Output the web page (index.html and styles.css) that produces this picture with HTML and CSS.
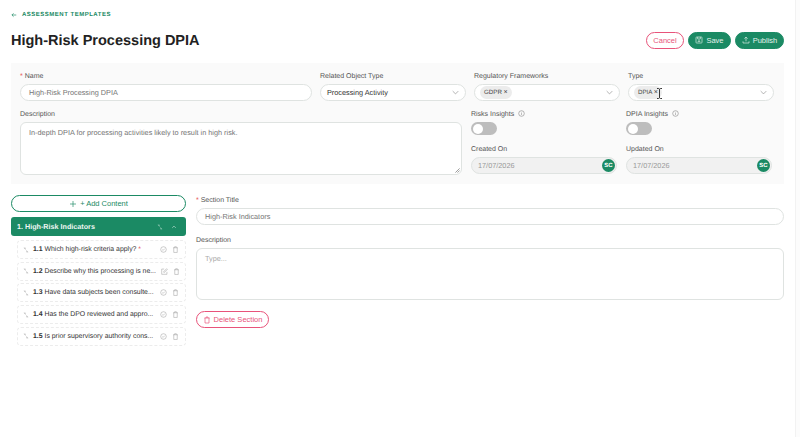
FILE: index.html
```html
<!DOCTYPE html>
<html lang="en">
<head>
    <meta charset="UTF-8">
    <meta name="viewport" content="width=device-width, initial-scale=1.0">
    <title>High-Risk Processing DPIA</title>
    <link rel="stylesheet" href="styles.css">
</head>
<body>
    <div class="page">
        <!-- Header -->
        <a href="#" class="back-link">
            <svg class="back-icon" viewBox="0 0 8 8"><path d="M7 4H1.2M3.4 1.800 1.200 4l2.200 2.200"/></svg>
            ASSESSMENT TEMPLATES
        </a>
        <div class="title-row">
            <h1>High-Risk Processing DPIA</h1>
            <div class="actions">
                <button class="btn btn-outline btn-cancel">Cancel</button>
                <button class="btn btn-primary btn-save">
                    <svg class="icon" viewBox="0 0 12 12"><rect x="1.500" y="1.500" width="9" height="9" rx="1"/><path d="M4 1.500v3h4v-3M4 8h4M6 5.500v3"/></svg>
                    Save
                </button>
                <button class="btn btn-primary btn-publish">
                    <svg class="icon" viewBox="0 0 12 12"><path d="M1.500 8v2.500h9V8M6 8V1.800M3.600 4 6 1.600 8.400 4"/></svg>
                    Publish
                </button>
            </div>
        </div>

        <!-- Template details -->
        <div class="details">
            <div class="details-top">
                <div class="field field-name">
                    <label><span class="req">*</span> Name</label>
                    <div class="input">High-Risk Processing DPIA</div>
                </div>
                <div class="field field-side">
                    <label>Related Object Type</label>
                    <div class="input select dark">Processing Activity
                        <svg class="chevron" viewBox="0 0 10 6"><path d="M1 1l4 4 4-4"/></svg>
                    </div>
                </div>
                <div class="field field-side">
                    <label>Regulatory Frameworks</label>
                    <div class="input select tags"><span class="tag">GDPR <i>×</i></span>
                        <svg class="chevron" viewBox="0 0 10 6"><path d="M1 1l4 4 4-4"/></svg>
                    </div>
                </div>
                <div class="field field-side">
                    <label>Type</label>
                    <div class="input select tags"><span class="tag">DPIA <i>×</i></span>
                        <svg class="chevron" viewBox="0 0 10 6"><path d="M1 1l4 4 4-4"/></svg>
                    </div>
                </div>
            </div>
            <div class="details-bottom">
                <div class="field field-desc">
                    <label>Description</label>
                    <div class="textarea textarea-top">In-depth DPIA for processing activities likely to result in high risk.
                        <svg class="resize" viewBox="0 0 6 6"><path d="M5.500.5l-5 5M5.500 3l-2.500 2.500"/></svg>
                    </div>
                </div>
                <div class="side-col side-risks">
                    <label>Risks Insights
                        <svg class="info" viewBox="0 0 8 8"><circle cx="4" cy="4" r="3.200"/><path d="M4 3.600v2M4 2.200v.6"/></svg>
                    </label>
                    <div class="toggle"><span class="knob"></span></div>
                    <label class="date-label">Created On</label>
                    <div class="input date">17/07/2026<span class="avatar">SC</span></div>
                </div>
                <div class="side-col side-dpia">
                    <label>DPIA Insights
                        <svg class="info" viewBox="0 0 8 8"><circle cx="4" cy="4" r="3.200"/><path d="M4 3.600v2M4 2.200v.6"/></svg>
                    </label>
                    <div class="toggle"><span class="knob"></span></div>
                    <label class="date-label">Updated On</label>
                    <div class="input date">17/07/2026<span class="avatar">SC</span></div>
                </div>
            </div>
        </div>

        <!-- Builder -->
        <div class="builder">
            <div class="outline">
                <button class="add-btn">
                    <svg class="icon" viewBox="0 0 12 12"><path d="M6 1.500v9M1.500 6h9"/></svg>
                    + Add Content
                </button>
                <div class="section-head">
                    <span>1. High-Risk Indicators</span>
                    <svg class="drag" viewBox="0 0 10 10"><path d="M1.500 1.500h2.500v2.500M4 4 1.500 1.500M8.500 8.500H6V6M6 6l2.500 2.500"/></svg>
                    <svg class="collapse" viewBox="0 0 10 6"><path d="M2 4.500l3-3 3 3"/></svg>
                </div>
                <div class="items">
                    <div class="item">
                        <svg class="drag" viewBox="0 0 10 10"><path d="M1.500 1.500h2.500v2.500M4 4 1.500 1.500M8.500 8.500H6V6M6 6l2.500 2.500"/></svg>
                        <span class="item-text"><b>1.1</b> Which high-risk criteria apply? <span class="req">*</span></span>
                        <svg class="item-icon" viewBox="0 0 10 10"><circle cx="5" cy="5" r="4"/><path d="M3.300 5.200l1.200 1.100 2.200-2.400"/></svg>
                        <svg class="item-icon" viewBox="0 0 10 10"><path d="M1.500 2.500h7M3.800 2.500V1h2.400v1.500M2.500 2.500v6.700h5V2.500"/></svg>
                    </div>
                    <div class="item">
                        <svg class="drag" viewBox="0 0 10 10"><path d="M1.500 1.500h2.500v2.500M4 4 1.500 1.500M8.500 8.500H6V6M6 6l2.500 2.500"/></svg>
                        <span class="item-text"><b>1.2</b> Describe why this processing is ne...</span>
                        <svg class="item-icon" viewBox="0 0 10 10"><path d="M8.500 5.500v3.500h-7.500v-7.500h3.500M4 6.200V5l4-4 1 1-4 4.200z"/></svg>
                        <svg class="item-icon" viewBox="0 0 10 10"><path d="M1.500 2.500h7M3.800 2.500V1h2.400v1.500M2.500 2.500v6.700h5V2.500"/></svg>
                    </div>
                    <div class="item">
                        <svg class="drag" viewBox="0 0 10 10"><path d="M1.500 1.500h2.500v2.500M4 4 1.500 1.500M8.500 8.500H6V6M6 6l2.500 2.500"/></svg>
                        <span class="item-text"><b>1.3</b> Have data subjects been consulte...</span>
                        <svg class="item-icon" viewBox="0 0 10 10"><circle cx="5" cy="5" r="4"/><path d="M3.300 5.200l1.200 1.100 2.200-2.400"/></svg>
                        <svg class="item-icon" viewBox="0 0 10 10"><path d="M1.500 2.500h7M3.800 2.500V1h2.400v1.500M2.500 2.500v6.700h5V2.500"/></svg>
                    </div>
                    <div class="item">
                        <svg class="drag" viewBox="0 0 10 10"><path d="M1.500 1.500h2.500v2.500M4 4 1.500 1.500M8.500 8.500H6V6M6 6l2.500 2.500"/></svg>
                        <span class="item-text"><b>1.4</b> Has the DPO reviewed and appro...</span>
                        <svg class="item-icon" viewBox="0 0 10 10"><circle cx="5" cy="5" r="4"/><path d="M3.300 5.200l1.200 1.100 2.200-2.400"/></svg>
                        <svg class="item-icon" viewBox="0 0 10 10"><path d="M1.500 2.500h7M3.800 2.500V1h2.400v1.500M2.500 2.500v6.700h5V2.500"/></svg>
                    </div>
                    <div class="item">
                        <svg class="drag" viewBox="0 0 10 10"><path d="M1.500 1.500h2.500v2.500M4 4 1.500 1.500M8.500 8.500H6V6M6 6l2.500 2.500"/></svg>
                        <span class="item-text"><b>1.5</b> Is prior supervisory authority cons...</span>
                        <svg class="item-icon" viewBox="0 0 10 10"><circle cx="5" cy="5" r="4"/><path d="M3.300 5.200l1.200 1.100 2.200-2.400"/></svg>
                        <svg class="item-icon" viewBox="0 0 10 10"><path d="M1.500 2.500h7M3.800 2.500V1h2.400v1.500M2.500 2.500v6.700h5V2.500"/></svg>
                    </div>
                </div>
            </div>
            <div class="editor">
                <label><span class="req">*</span> Section Title</label>
                <div class="input">High-Risk Indicators</div>
                <label class="editor-desc">Description</label>
                <div class="textarea textarea-section placeholder">Type...</div>
                <button class="btn btn-outline btn-delete">
                    <svg class="icon" viewBox="0 0 12 12"><path d="M2 3h8M4.500 3V1.500h3V3M3 3v7.500h6V3"/></svg>
                    Delete Section
                </button>
            </div>
        </div>
    </div>

    <!-- Mouse pointer over the Type select -->
    <svg class="cursor" viewBox="0 0 7 11"><path d="M1 .5h1.700l.8.7.8-.7H6M3.500 1.200v8.600M1 10.500h1.700l.8-.7.8.7H6"/></svg>
    <div class="scroll-edge"></div>
</body>
</html>
```

FILE: styles.css
```css
:root {
    --green: #1b8a64;
    --red: #e8537a;
    --border: #dfe3e1;
    --text: #3a3a3a;
    --muted: #757575;
}

* {
    box-sizing: border-box;
}

body {
    font-family: "Liberation Sans", Arial, sans-serif;
    background-color: #fff;
    color: var(--text);
    margin: 0;
    font-size: 7px;
    text-rendering: geometricPrecision;
}

.page {
    padding: 10px 16px 0 11px;
}

/* Header */
.back-link {
    display: flex;
    align-items: center;
    gap: 5px;
    height: 9px;
    color: var(--green);
    font-size: 6px;
    font-weight: bold;
    letter-spacing: 0.5px;
    text-decoration: none;
}

.back-icon {
    width: 6px;
    height: 6px;
    fill: none;
    stroke: var(--green);
    stroke-width: 0.9;
}

.title-row {
    display: flex;
    justify-content: space-between;
    align-items: center;
    margin-top: 11px;
    height: 22px;
}

h1 {
    margin: 0;
    font-size: 14.500px;
    color: #222;
}

.actions {
    display: flex;
    gap: 4px;
    margin-top: -2px;
}

.btn {
    display: flex;
    align-items: center;
    justify-content: center;
    gap: 3px;
    height: 17px;
    padding: 0;
    border-radius: 9px;
    font-family: inherit;
    font-size: 7.500px;
}

.btn-cancel {
    width: 38px;
}

.btn-save {
    width: 43px;
}

.btn-publish {
    width: 49px;
}

.btn-primary {
    background-color: var(--green);
    border: 1px solid var(--green);
    color: #e4f2ec;
}

.btn-outline {
    background-color: #fff;
    border: 1px solid var(--red);
    color: var(--red);
}

.icon {
    width: 8px;
    height: 8px;
    fill: none;
    stroke: currentColor;
    stroke-width: 1;
}

/* Template details */
.details {
    margin-top: 11px;
    height: 121px;
    padding: 9px 9px 0;
    background-color: #fafafa;
}

.details-top {
    display: flex;
    gap: 8px;
}

.details-bottom {
    display: flex;
    margin-top: 9px;
}

.field label,
.side-col label,
.editor label {
    display: block;
    height: 12px;
    line-height: 9px;
    color: #555;
}

.req {
    color: #e5484d;
}

.field-name {
    width: 292px;
}

.field-side {
    width: 146px;
}

.input {
    display: flex;
    align-items: center;
    height: 17px;
    padding: 0 8px;
    background-color: #fff;
    border: 1px solid var(--border);
    border-radius: 9px;
    color: var(--muted);
    font-size: 7.300px;
}

.select {
    justify-content: space-between;
    padding-right: 6px;
}

.dark {
    color: #333;
    padding-left: 6px;
}

.tags {
    padding-left: 5px;
}

.tag {
    display: inline-block;
    height: 13px;
    line-height: 13px;
    padding: 0 4px;
    background-color: #ececec;
    border-radius: 7px;
    color: #444;
    font-size: 6.200px;
}

.tag i {
    font-style: normal;
    font-size: 7px;
}

.chevron {
    width: 7px;
    height: 5px;
    fill: none;
    stroke: #888;
    stroke-width: 0.9;
}

.textarea {
    position: relative;
    padding: 5px 8px;
    background-color: #fff;
    border: 1px solid var(--border);
    border-radius: 6px;
    color: var(--muted);
    font-size: 7.300px;
}

.textarea-top {
    width: 442px;
    height: 53px;
}

.resize {
    position: absolute;
    right: 1px;
    bottom: 1px;
    width: 5px;
    height: 5px;
    fill: none;
    stroke: #555;
    stroke-width: 0.7;
}

.field-desc {
    width: 451px;
}

.side-col {
    width: 146px;
}

.side-dpia {
    margin-left: 9px;
}

.info {
    display: inline-block;
    width: 7px;
    height: 7px;
    margin-left: 2px;
    vertical-align: -1px;
    fill: none;
    stroke: #888;
    stroke-width: 0.7;
}

.toggle {
    width: 26px;
    height: 13px;
    padding: 1.500px;
    background-color: #bdbdbd;
    border-radius: 7px;
}

.knob {
    display: block;
    width: 10px;
    height: 10px;
    background-color: #fff;
    border-radius: 50%;
}

.side-col .date-label {
    margin-top: 10px;
}

.date {
    justify-content: space-between;
    padding: 0 1px 0 6px;
    background-color: #f1f1f1;
    color: #999;
}

.avatar {
    display: flex;
    align-items: center;
    justify-content: center;
    width: 13px;
    height: 13px;
    background-color: var(--green);
    border-radius: 50%;
    color: #fff;
    font-size: 6px;
    font-weight: bold;
}

/* Builder */
.builder {
    display: flex;
    gap: 10px;
    margin-top: 11px;
}

.outline {
    width: 175px;
}

.add-btn {
    display: flex;
    align-items: center;
    justify-content: center;
    gap: 3px;
    width: 100%;
    height: 17px;
    background-color: #fff;
    border: 1px solid var(--green);
    border-radius: 9px;
    color: var(--green);
    font-family: inherit;
    font-size: 7.500px;
}

.section-head {
    display: flex;
    align-items: center;
    height: 19px;
    margin-top: 5px;
    padding: 0 9px 0 6px;
    background-color: var(--green);
    border-radius: 3px;
    color: #eef7f3;
    font-size: 7.200px;
    font-weight: bold;
}

.section-head span {
    flex: 1;
}

.drag {
    flex: none;
    width: 6px;
    height: 6px;
    fill: none;
    stroke: #b5b5b5;
    stroke-width: 0.9;
}

.section-head .drag {
    stroke: #9fcfbc;
}

.collapse {
    flex: none;
    width: 6px;
    height: 4px;
    margin-left: 8px;
    fill: none;
    stroke: #cfe6dc;
    stroke-width: 1;
}

.items {
    display: flex;
    flex-direction: column;
    gap: 2.700px;
    margin-top: 4px;
    margin-left: 6px;
}

.item {
    display: flex;
    align-items: center;
    height: 19px;
    padding: 0 6px 0 5px;
    border: 1px dashed #ececec;
    border-radius: 4px;
    color: #333;
    font-size: 6.900px;
}

.item-text {
    flex: 1;
    margin-left: 4px;
    white-space: nowrap;
}

.item-icon {
    flex: none;
    width: 7px;
    height: 7px;
    margin-left: 5px;
    fill: none;
    stroke: #999;
    stroke-width: 0.7;
}

.editor {
    flex: 1;
    padding-top: 1px;
}

.editor .editor-desc {
    margin-top: 11px;
}

.textarea-section {
    height: 52px;
}

.placeholder {
    color: #aaa;
}

.btn-delete {
    margin-top: 11px;
    width: 73px;
    white-space: nowrap;
}

/* Pointer and window edge */
.cursor {
    position: absolute;
    left: 656px;
    top: 88px;
    width: 7px;
    height: 11px;
    fill: none;
    stroke: #222;
    stroke-width: 0.9;
}

.scroll-edge {
    position: absolute;
    left: 795px;
    top: 0;
    width: 5px;
    height: 100%;
    background-color: #fcfcfc;
    border-left: 1px solid #f2f2f2;
}
```
